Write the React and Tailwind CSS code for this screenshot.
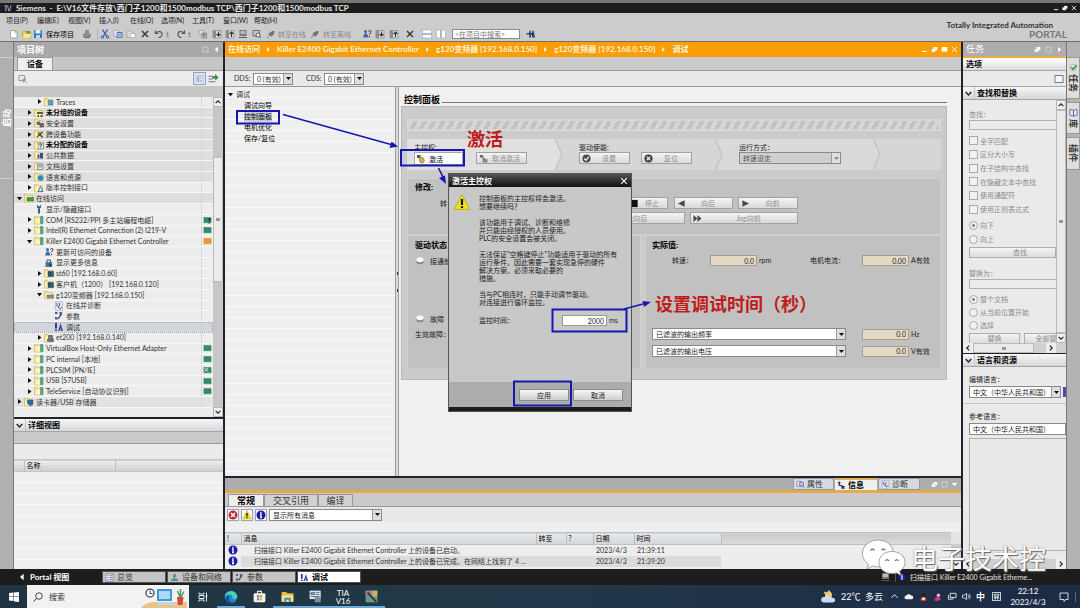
import React from "react";

const stripes =
  "bg-[repeating-linear-gradient(to_bottom,#efefef_0px,#efefef_10px,#fafafa_10px,#fafafa_11px)]";

/* ---------- small drawings ---------- */

function Svg({ children, className = "w-[10px] h-[10px]", box = "0 0 20 20" }) {
  return (
    <svg viewBox={box} className={"block shrink-0 " + className} aria-hidden="true">
      {children}
    </svg>
  );
}

function Glyph({ kind, className }) {
  const k = "#3a3a3a";
  const art = {
    newdoc: (
      <>
        <path d="M3 3h10l3 3v12H3z" fill="#fff" stroke="#7a93ad" strokeWidth="1.5" />
        <path d="M13 1l1.5 3L18 5l-3 2-1 3-2-3-3-1 3-2z" fill="#e9c522" />
      </>
    ),
    open: (
      <>
        <path d="M1 5h7l2 3h8v10H1z" fill="#f2cf4a" stroke="#b3902a" />
        <path d="M9 4h7v5H9z" fill="#4f9b4f" />
        <path d="M4 10h15l-3 8H1z" fill="#fbe58b" />
      </>
    ),
    save: (
      <>
        <rect x="2" y="2" width="16" height="16" rx="1" fill="#2878c2" />
        <rect x="5" y="2" width="10" height="7" fill="#e8f1fa" />
        <rect x="6" y="12" width="8" height="6" fill="#bcd7ee" />
      </>
    ),
    print: (
      <>
        <path d="M6 2h8v7H6zM2 9h16v7H2z" fill="#8d8d8d" />
        <path d="M4 16h12v2H4z" fill="#6c6c6c" />
      </>
    ),
    cut: (
      <>
        <path d="M5 1l8 13M15 1L7 14" stroke="#3457a8" strokeWidth="2.4" />
        <circle cx="5" cy="16" r="2.5" fill="none" stroke="#3457a8" strokeWidth="2" />
        <circle cx="15" cy="16" r="2.5" fill="none" stroke="#3457a8" strokeWidth="2" />
      </>
    ),
    copy: (
      <>
        <path d="M2 3h9v11H2z" fill="#eef3fb" stroke="#6c86b8" />
        <path d="M8 7h10v10H8z" fill="#c9d8f0" stroke="#3457a8" strokeWidth="1.6" />
        <path d="M10 10h6M10 13h6" stroke="#3457a8" />
      </>
    ),
    paste: (
      <>
        <path d="M2 4h11v13H2z" fill="#dcdcdc" stroke="#8f8f8f" />
        <path d="M9 9h9v8H9z" fill="#fff" stroke="#8f8f8f" />
      </>
    ),
    x: <path d="M4 4l12 12M16 4L4 16" stroke={k} strokeWidth="3" />,
    undo: (
      <path d="M3 3v6h6M4 9c3-6 13-5 12 2 0 4-4 6-7 6" fill="none" stroke="#555" strokeWidth="2.4" />
    ),
    redo: (
      <path d="M17 3v6h-6M16 9c-3-6-13-5-12 2 0 4 4 6 7 6" fill="none" stroke="#555" strokeWidth="2.4" />
    ),
    updown: (
      <path d="M10 3v10M6 8h8M6 16h8" fill="none" stroke="#777" strokeWidth="2" />
    ),
    chip: (
      <>
        <path d="M2 3h9v8H2z" fill="#e4e4e4" stroke="#777" />
        <path d="M8 8h9v10H8z" fill="#c7c7c7" stroke="#555" />
        <path d="M10 11h5M10 14h5" stroke="#444" strokeWidth="1.4" />
      </>
    ),
    down: (
      <>
        <path d="M2 3h16v15H2z" fill="#dedede" stroke="#666" />
        <path d="M2 3h6v15H2z" fill="#8c8c8c" />
        <path d="M13 5v8M9 10l4 4 4-4" fill="none" stroke="#333" strokeWidth="2.2" />
      </>
    ),
    up: (
      <>
        <path d="M2 3h16v15H2z" fill="#dedede" stroke="#666" />
        <path d="M2 3h6v15H2z" fill="#8c8c8c" />
        <path d="M13 16V7M9 10l4-4 4 4" fill="none" stroke="#333" strokeWidth="2.2" />
      </>
    ),
    plc: (
      <>
        <path d="M3 2h14v12H3z" fill="#777" />
        <path d="M5 4h10v6H5z" fill="#bbb" />
        <path d="M2 16h16v2H2z" fill="#555" />
      </>
    ),
    find: (
      <>
        <path d="M2 3h13v11H2z" fill="#c9c9c9" stroke="#555" strokeWidth="1.6" />
        <circle cx="12" cy="12" r="4" fill="#eee" stroke="#444" strokeWidth="1.6" />
        <path d="M15 15l3 3" stroke="#444" strokeWidth="2" />
      </>
    ),
    plug: (
      <path d="M2 18l5-5M6 9l5 5 5-4 2-7-7 2z" fill="#777" stroke="#666" strokeWidth="2" />
    ),
    help: (
      <>
        <path d="M2 17l3-8h5l3 8z" fill="#3d68a0" />
        <circle cx="7" cy="5" r="3" fill="#3d68a0" />
        <path d="M13 5c1-3 6-2 5 1 0 2-3 2-3 5M15 14v2" fill="none" stroke="#222" strokeWidth="2" />
      </>
    ),
    split1: (
      <>
        <rect x="1" y="2" width="18" height="16" fill="#fff" stroke="#8f9db5" />
        <path d="M1 10h18" stroke="#5a6fa5" strokeWidth="2" />
      </>
    ),
    split2: (
      <>
        <rect x="1" y="2" width="18" height="16" fill="#fff" stroke="#8f9db5" />
        <path d="M10 2v16" stroke="#5a6fa5" strokeWidth="2" />
      </>
    ),
    bino: (
      <path d="M1 8h5l1-5h2l1 5h2l1-5h2l3 14h-6v-5h-2v5H6l1-6H1z" fill="#2b3f78" />
    ),
    wrench: (
      <path d="M6 1v6l4 3 4-3V1l-3 4H9zM8 9h4v10H8z" fill="#35588f" />
    ),
    info: (
      <>
        <path d="M3 8h13v10H3z" fill="#4a7a9b" />
        <path d="M6 8V4h7v4" fill="none" stroke="#2f5571" strokeWidth="2" />
        <path d="M11 10l6 4-6 4z" fill="#24415a" />
      </>
    ),
    diag: (
      <>
        <path d="M3 1h14v18H3z" fill="#e3e8f2" stroke="#8c98b3" />
        <path d="M6 4v5c0 3 5 3 5 0V4M9 11c0 6 6 6 6 1" fill="none" stroke="#3b4f86" strokeWidth="1.8" />
      </>
    ),
    param: (
      <>
        <path d="M2 2h5v4H2zM11 2h6l-6 8zM2 12h5v5H2z" fill="#545a94" />
        <path d="M8 16l8-11" stroke="#2d2d66" strokeWidth="2.4" />
      </>
    ),
    tune: (
      <>
        <path d="M2 2h4v11H2zM2 15h4v3H2z" fill="#2636b5" />
        <path d="M13 2l5 16h-4l-1-5-2 5H8l3-9z" fill="#3c4b92" />
      </>
    ),
    overview: (
      <>
        <path d="M2 2h16v16H2z" fill="#f4f6fa" stroke="#66728e" strokeWidth="1.6" />
        <path d="M5 6h3M5 10h3M5 14h3M10 6h6M10 10h6M10 14h6" stroke="#66728e" strokeWidth="2" />
      </>
    ),
    network: (
      <>
        <path d="M7 3h6v6H7zM3 13h14v5H3z" fill="#4a8d8d" />
        <path d="M10 9v4" stroke="#2c5e5e" strokeWidth="2" />
      </>
    ),
    hand: (
      <>
        <path d="M2 2h7v6H2z" fill="#555" />
        <path d="M7 7l2-2 3 2 3 1 2 5-2 5H9l-3-6z" fill="#d9a94a" stroke="#8a6420" />
      </>
    ),
    handoff: (
      <>
        <path d="M2 2h7v6H2zM8 8h4v4H8z" fill="#666" />
        <path d="M9 12h9v6H9z" fill="#8a8a8a" stroke="#555" />
      </>
    ),
    ok: (
      <>
        <circle cx="10" cy="10" r="9" fill="#4b4b4b" />
        <path d="M5 10l4 4 6-8" fill="none" stroke="#fff" strokeWidth="2.6" />
      </>
    ),
    no: (
      <>
        <circle cx="10" cy="10" r="9" fill="#3d3d3d" />
        <path d="M6 6l8 8M14 6l-8 8" stroke="#fff" strokeWidth="2.6" />
      </>
    ),
    left: <path d="M17 3v14L2 10z" fill="#4a4a4a" />,
    right: <path d="M3 3v14l15-7z" fill="#4a4a4a" />,
    ff: <path d="M1 2v16l9-8zM10 2v16l9-8z" fill="#4a4a4a" />,
    stop: <rect x="3" y="2" width="14" height="16" fill="#111" />,
    err: (
      <>
        <circle cx="10" cy="10" r="9" fill="#c3272d" />
        <path d="M6 6l8 8M14 6l-8 8" stroke="#fff" strokeWidth="3" />
      </>
    ),
    warn: (
      <>
        <path d="M10 1l9 17H1z" fill="#f2e21c" stroke="#b9a90f" />
        <path d="M10 6v7M10 14.5v2" stroke="#111" strokeWidth="2.6" />
      </>
    ),
    note: (
      <>
        <circle cx="10" cy="10" r="9" fill="#1c1ca8" />
        <path d="M10 3.500v2.500M8 8h2v7M8 15h4" stroke="#fff" strokeWidth="2.600" fill="none" />
      </>
    ),
    props: (
      <>
        <path d="M2 3h9v11H2z" fill="#eef1f7" stroke="#6e7b99" strokeWidth="1.5" />
        <circle cx="12" cy="9" r="5" fill="none" stroke="#4a5f93" strokeWidth="1.8" />
        <path d="M15 13l3 4" stroke="#4a5f93" strokeWidth="2" />
      </>
    ),
    msg: (
      <>
        <path d="M5 1v9h6v6h6M2 4h6" fill="none" stroke="#22305f" strokeWidth="2.6" />
        <path d="M9 11l5 5 4-5z" fill="#22305f" />
      </>
    ),
    float: (
      <>
        <path d="M7 3h11v9H7z" fill="#fff" />
        <path d="M2 8h11v9H2z" fill="#fff" stroke="#bbb" />
      </>
    ),
    boxo: <rect x="3" y="3" width="14" height="14" fill="none" stroke="#dcdcdc" strokeWidth="2" />,
    max: <rect x="2" y="3" width="16" height="13" fill="#fff" />,
    min: <path d="M3 14h14v3H3z" fill="#fff" />,
    closew: <path d="M3 3l14 14M17 3L3 17" stroke="#fff" strokeWidth="2.6" />,
    triR: <path d="M6 2v16l9-8z" fill="#fff" />,
    triL: <path d="M14 2v16L5 10z" fill="#fff" />,
    triD: <path d="M2 6h16l-8 9z" fill="#fff" />,
    panel: <rect x="2" y="3" width="16" height="14" fill="#f7f8fb" stroke="#6c7a9c" strokeWidth="2" />,
    sync: (
      <>
        <path d="M1 5h8v2H1zM1 10h8v2H1zM1 15h12v2H1z" fill="#6c7a8c" />
        <path d="M8 6h5V2l6 6-6 6v-4H8z" fill="#2b8a3e" />
      </>
    ),
    list: (
      <>
        <path d="M2 3h16v14H2z" fill="#fff" stroke="#7f8fb0" />
        <path d="M5 6h4v9H5zM11 6h5M11 10h5M11 14h5" stroke="#7f8fb0" strokeWidth="1.6" fill="#c5d0e4" />
      </>
    ),
    device: (
      <>
        <path d="M2 3h11v10H2z" fill="none" stroke="#9a9a9a" strokeWidth="2" />
        <path d="M8 9l9 8M16 9l-6 8" stroke="#8c8c8c" strokeWidth="2" />
      </>
    ),
    book: (
      <path d="M2 3l8 2v13l-8-2zM18 3l-8 2v13l8-2z" fill="#e8ecf8" stroke="#4352a0" strokeWidth="1.6" />
    ),
    task: (
      <>
        <circle cx="9" cy="10" r="7" fill="#dfe7df" stroke="#788" />
        <path d="M5 9l4 5 8-9" fill="none" stroke="#2b8a3e" strokeWidth="3" />
      </>
    ),
  };
  return <Svg className={className}>{art[kind]}</Svg>;
}

function Folder({ badge }) {
  const art = {
    page: <path d="M8 7h10v9H8z" fill="#5aa0cf" stroke="#2e6f9f" />,
    dev: <path d="M6 8h12v4H6zM7 14h3v4H7zM13 14h4v4h-4z" fill="#4d5a3c" />,
    sec: <path d="M6 8h6v5H6zM12 11h7v7h-7z" fill="#b4552f" stroke="#35629e" strokeWidth="1.5" />,
    cross: <path d="M6 16L17 6M8 7l9 10" stroke="#39512f" strokeWidth="3" />,
    ask: (
      <>
        <rect x="8" y="6" width="11" height="12" fill="#dfe3df" stroke="#555" />
        <path d="M11 9c1-2 5-1 4 1l-2 3M13 15v1" fill="none" stroke="#222" strokeWidth="1.8" />
      </>
    ),
    data: <path d="M7 9h4v8H7zM12 6h6v11h-6z" fill="#2f4fa0" />,
    doc: <path d="M7 6h11v11H7zM9 9h7M9 12h7" fill="#e3e8ee" stroke="#68788c" strokeWidth="1.5" />,
    lang: <circle cx="13" cy="12" r="6" fill="#2e86b8" stroke="#8cc7a5" strokeWidth="2" />,
    ver: <path d="M8 17l5-10 5 10z" fill="#dbe7f3" stroke="#3a6ea5" strokeWidth="1.8" />,
    net: <path d="M6 9h13v7H6z" fill="#3f9b4b" stroke="#23662d" />,
    port: <path d="M13 3h5v14h-5z" fill="#4fae8c" stroke="#2c7d62" />,
    cpu: <path d="M8 7h11v10H8zM10 9h3v5h-3z" fill="#2f6570" stroke="#1f3b43" />,
    drive: <path d="M6 10h13v6H6z" fill="#8d8d8d" stroke="#5d5d5d" />,
    io: <path d="M9 5h8v6H9zM7 12h12v5H7z" fill="#777" stroke="#444" />,
    card: <path d="M7 6h11v8l-5 4-6-5z" fill="#2d6d9c" stroke="#1f4c70" />,
  };
  return (
    <Svg>
      <path d="M1 3h6l2 2h8v13H1z" fill="#f6e084" stroke="#c4a640" />
      <path d="M3 7h13v10H3z" fill="#fdf4c4" />
      {art[badge]}
    </Svg>
  );
}

function Caret({ open }) {
  return (
    <Svg className="w-[5px] h-[5px]" box="0 0 10 10">
      {open ? <path d="M0 2h10L5 9z" fill="#111" /> : <path d="M2 0v10l7-5z" fill="#111" />}
    </Svg>
  );
}

function Chevron({ dir = "down", className = "w-[7px] h-[7px]" }) {
  const d = {
    down: "M1 3l4 4 4-4",
    up: "M1 7l4-4 4 4",
    left: "M7 1L3 5l4 4",
    right: "M3 1l4 4-4 4",
  }[dir];
  return (
    <Svg className={className} box="0 0 10 10">
      <path d={d} fill="none" stroke="#222" strokeWidth="2" />
    </Svg>
  );
}

/* ---------- controls ---------- */

function Select({ label, value, className = "", flat }) {
  return (
    <div
      className={
        "flex h-[12px] items-stretch border border-[#8a8a8a] " +
        (flat ? "bg-[#cfcfcf] text-[#555] " : "bg-white ") +
        className
      }
    >
      <select
        aria-label={label}
        defaultValue={value}
        className="min-w-0 flex-1 appearance-none bg-transparent pl-[3px] text-[7px] leading-[10px]"
      >
        <option>{value}</option>
      </select>
      <span className="flex w-[9px] shrink-0 items-center justify-center border-l border-[#9a9a9a] bg-[#dedede]">
        <Svg className="w-[5px] h-[5px]" box="0 0 10 10">
          <path d="M0 2h10L5 8z" fill={flat ? "#888" : "#111"} />
        </Svg>
      </span>
    </div>
  );
}

function PanelButton({ icon, children, className = "" }) {
  return (
    <button
      type="button"
      className={
        "flex h-[12px] items-center border border-[#a2a2a2] bg-linear-to-b from-[#f4f4f4] to-[#d9d9d9] px-[2px] text-[#8e8e8e] " +
        className
      }
    >
      <Glyph kind={icon} className="h-[9px] w-[9px]" />
      <span className="flex-1 text-center">{children}</span>
    </button>
  );
}

function Reading({ label, value, unit }) {
  return (
    <div className="flex shrink-0 items-center gap-[2px]">
      <input
        aria-label={label}
        readOnly
        value={value}
        className="h-[11px] w-[47px] border border-[#a39d90] bg-[#e4d9c3] pr-[2px] text-right text-[7px]"
      />
      <span className="w-[26px] whitespace-nowrap">{unit}</span>
    </div>
  );
}

function SectionHead({ children }) {
  return (
    <div className="flex h-[13px] shrink-0 items-center border-b border-[#a5a5a5] bg-linear-to-b from-[#f7f7f7] to-[#d6d6d6] pl-[2px] text-[8px] font-bold text-black">
      <Chevron />
      <span className="ml-[2px] border-l border-[#c2c2c2] pl-[2px]">{children}</span>
    </div>
  );
}

/* ---------- top ---------- */

function TitleBar() {
  return (
    <div className="flex h-[13px] shrink-0 items-center border-t-[3px] border-[#777] bg-[#1d1d1d] px-[3px] text-[8px] font-bold text-[#e6e6e6]">
      <Svg className="h-[8px] w-[10px]">
        <path d="M1 3h8v3H1zM3 6h3v12H3zM10 3l3 12 3-12h3l-4 15h-4L8 8z" fill="#8f97b8" />
      </Svg>
      <span className="ml-[3px] flex-1 whitespace-pre">
        {"Siemens  -  E:\\V16文件存放\\西门子1200和1500modbus TCP\\西门子1200和1500modbus TCP"}
      </span>
      <span className="flex gap-[3px]">
        <Glyph kind="min" className="h-[6px] w-[6px]" />
        <Glyph kind="float" className="h-[6px] w-[6px]" />
        <Glyph kind="closew" className="h-[6px] w-[6px]" />
      </span>
    </div>
  );
}

const menus = [
  "项目(P)", "编辑(E)", "视图(V)", "插入(I)", "在线(O)",
  "选项(N)", "工具(T)", "窗口(W)", "帮助(H)",
];

function Tool({ kind, label, children, className = "w-[13px]" }) {
  return (
    <button type="button" aria-label={label} className={"flex h-[12px] shrink-0 items-center justify-center " + className}>
      <Glyph kind={kind} className="h-[10px] w-[10px]" />
      {children}
    </button>
  );
}

function Header() {
  return (
    <header className="flex h-[29px] shrink-0 justify-between border-b border-[#6f6f6f] bg-[#cccccc]">
      <div>
        <nav className="flex h-[14px] items-center gap-[3px] pl-[6px] text-[7px] text-[#222]">
          {menus.map((m) => (
            <a key={m} href="#menu" className="w-[28px] whitespace-nowrap">
              {m}
            </a>
          ))}
        </nav>
        <div className="flex h-[14px] items-center pl-[7px] text-[7px]">
          <Tool kind="newdoc" label="新建" />
          <Tool kind="open" label="打开" />
          <button type="button" className="flex w-[44px] items-center gap-[3px] whitespace-nowrap text-black">
            <Glyph kind="save" className="h-[10px] w-[10px]" />
            保存项目
          </button>
          <Tool kind="print" label="打印" className="w-[21px] border-r border-[#b5b5b5]" />
          <Tool kind="cut" label="剪切" />
          <Tool kind="copy" label="复制" />
          <Tool kind="paste" label="粘贴" />
          <Tool kind="x" label="删除" className="w-[15px]" />
          <Tool kind="undo" label="撤消" className="w-[21px]">
            <Glyph kind="updown" className="h-[7px] w-[7px]" />
          </Tool>
          <Tool kind="redo" label="重做" className="w-[22px]">
            <Glyph kind="updown" className="h-[7px] w-[7px]" />
          </Tool>
          <Tool kind="chip" label="编译" className="w-[15px]" />
          <Tool kind="down" label="下载" />
          <Tool kind="up" label="上传" />
          <Tool kind="plc" label="仿真" />
          <Tool kind="find" label="查看" className="w-[15px]" />
          <button type="button" className="flex w-[46px] items-center gap-[3px] whitespace-nowrap pl-[2px] text-[#8a8a8a]">
            <Glyph kind="plug" className="h-[9px] w-[9px]" />
            转至在线
          </button>
          <button type="button" className="flex w-[50px] items-center gap-[4px] whitespace-nowrap text-[#8a8a8a]">
            <Glyph kind="plug" className="h-[9px] w-[9px]" />
            转至离线
          </button>
          <Tool kind="help" label="可访问的设备" />
          <Tool kind="down" label="启动" />
          <Tool kind="up" label="停止" className="w-[15px]" />
          <Tool kind="x" label="关闭" className="w-[18px]" />
          <Tool kind="split1" label="水平拆分" className="w-[15px]" />
          <Tool kind="split2" label="垂直拆分" />
          <input
            aria-label="搜索"
            placeholder="<在项目中搜索>"
            className="ml-[5px] h-[10px] w-[68px] border border-[#8a8a8a] bg-white pl-[2px] text-[7px] placeholder:text-[#777]"
          />
          <Tool kind="bino" label="查找" className="w-[22px]" />
        </div>
      </div>
      <div className="flex flex-col items-end pr-[13px] pt-[8px] leading-[9px]">
        <span className="pr-[14px] text-[8px] font-bold text-[#333]">Totally Integrated Automation</span>
        <span className="text-[10px] font-bold text-[#777]">PORTAL</span>
      </div>
    </header>
  );
}

/* ---------- project tree ---------- */

const tree = [
  [2, "r", "page", "Traces", "l"],
  [1, "r", "dev", "未分组的设备", "b"],
  [1, "r", "sec", "安全设置", "s"],
  [1, "r", "cross", "跨设备功能", "s"],
  [1, "r", "ask", "未分配的设备", "b"],
  [1, "r", "data", "公共数据", "s"],
  [1, "r", "doc", "文档设置", "s"],
  [1, "r", "lang", "语言和资源", "s"],
  [1, "r", "ver", "版本控制接口", "l"],
  [0, "d", "net", "在线访问", "s"],
  [1, "", "@wrench", "显示/隐藏接口", "l"],
  [1, "r", "port", "COM [RS232/PPI 多主站编程电缆]", "l", "ask"],
  [1, "r", "port", "Intel(R) Ethernet Connection (2) I219-V", "l", "green"],
  [1, "d", "port", "Killer E2400 Gigabit Ethernet Controller", "l", "orange"],
  [2, "", "@help", "更新可访问的设备", "l"],
  [2, "", "@info", "显示更多信息", "l"],
  [2, "r", "cpu", "st60 [192.168.0.60]", "l"],
  [2, "r", "cpu", "客户机（1200） [192.168.0.120]", "l"],
  [2, "d", "drive", "g120变频器 [192.168.0.150]", "l"],
  [3, "", "@diag", "在线并诊断", "l"],
  [3, "", "@param", "参数", "l"],
  [3, "", "@tune", "调试", "x"],
  [2, "r", "io", "et200 [192.168.0.140]", "l"],
  [1, "r", "port", "VirtualBox Host-Only Ethernet Adapter", "l", "green"],
  [1, "r", "port", "PC internal [本地]", "l", "green"],
  [1, "r", "port", "PLCSIM [PN/IE]", "l", "cross"],
  [1, "r", "port", "USB [S7USB]", "l", "green"],
  [1, "r", "port", "TeleService [自动协议识别]", "l", "green"],
  [0, "r", "card", "读卡器/USB 存储器", "m"],
];

const indent = ["pl-[3px]", "pl-[13px]", "pl-[23px]", "pl-[33px]"];
const shade = {
  l: "bg-[#ededed]",
  m: "bg-[#e2e2e2]",
  s: "bg-[#dedede]",
  b: "bg-[#dedede] font-bold text-black",
  x: "bg-[#d2d6da] outline-1 -outline-offset-1 outline-dotted outline-[#9aa4ae]",
};

function PortState({ kind }) {
  if (!kind) return null;
  return (
    <Svg className="h-[8px] w-[9px]">
      <path d="M1 3l3 1h15v13H1z" fill={kind === "orange" ? "#e59c22" : "#2f8f63"} stroke={kind === "orange" ? "#b87410" : "#1f6b48"} />
      {kind === "ask" && <path d="M12 9c1-3 6-2 5 1l-3 3M14 16v3" fill="none" stroke="#111" strokeWidth="2.4" />}
      {kind === "cross" && <path d="M3 5l8 9M11 5l-8 9" stroke="#e8e8e8" strokeWidth="2.4" />}
    </Svg>
  );
}

function VScroll({ className = "", before, thumb, after }) {
  return (
    <div className={"flex w-[10px] shrink-0 flex-col bg-[#c6c6c6] " + className}>
      <span className="flex h-[10px] shrink-0 items-center justify-center border border-[#b5b5b5] bg-[#eeeeee]">
        <Chevron dir="up" className="h-[6px] w-[6px]" />
      </span>
      <span className={before} />
      <span className={"flex items-center justify-center border border-[#bababa] bg-[#ebebeb] " + thumb}>
        <span className="h-[3px] w-[4px] bg-[#999]" />
      </span>
      <span className={after} />
      <span className="flex h-[10px] shrink-0 items-center justify-center border border-[#b5b5b5] bg-[#eeeeee]">
        <Chevron dir="down" className="h-[6px] w-[6px]" />
      </span>
    </div>
  );
}

function ProjectTree() {
  return (
    <aside className="flex w-[212px] shrink-0 flex-col border-r-2 border-l border-r-[#22222e] border-l-[#777] bg-[#c6c6c6]">
      <div className="flex h-[15px] shrink-0 items-center justify-between bg-[#a9a9a9] px-[3px] text-[9px] font-bold text-white">
        <span>项目树</span>
        <span className="flex gap-[4px]">
          <Glyph kind="boxo" className="h-[7px] w-[7px]" />
          <Glyph kind="triL" className="h-[7px] w-[7px]" />
        </span>
      </div>
      <div className="flex h-[14px] shrink-0 items-end border-b border-[#999] pl-[3px]">
        <button type="button" className="h-[13px] w-[36px] border border-b-0 border-[#999] bg-[#efefef] text-[8px] font-bold text-black">
          设备
        </button>
      </div>
      <div className="flex h-[15px] shrink-0 items-center bg-[#ececec] px-[4px]">
        <Glyph kind="device" className="h-[10px] w-[10px]" />
        <span className="flex-1" />
        <button type="button" aria-label="列表" className="mr-[2px] border border-[#8ea2c8] bg-[#dfe6f3] p-px">
          <Glyph kind="list" className="h-[9px] w-[9px]" />
        </button>
        <Glyph kind="sync" className="h-[11px] w-[11px]" />
      </div>
      <div className="h-[11px] shrink-0" />
      <div className="flex h-[320px] shrink-0">
        <div className="min-w-0 flex-1 bg-[#ededed]">
          <div role="tree" className="flex h-[311px] flex-col text-[7px]">
            {tree.map(([lvl, arrow, icon, text, tone, port], i) => (
              <div
                key={i}
                role="treeitem"
                aria-selected={tone === "x"}
                className={"flex min-h-0 flex-1 items-center gap-[2px] border-b border-[#f7f7f7] whitespace-nowrap " + indent[lvl] + " " + shade[tone]}
              >
                {arrow ? <Caret open={arrow === "d"} /> : <span className="w-[5px]" />}
                {icon[0] === "@" ? <Glyph kind={icon.slice(1)} className="h-[10px] w-[10px]" /> : <Folder badge={icon} />}
                <span className="flex-1">{text}</span>
                <span className="flex w-[12px] shrink-0 items-center self-stretch border-l border-[#d5d5d5] pl-[1px]">
                  <PortState kind={port} />
                </span>
              </div>
            ))}
          </div>
        </div>
        <VScroll before="h-[50px]" thumb="h-[125px]" after="flex-1" />
      </div>
      <div className="shrink-0 border-t-2 border-[#22222e]">
        <SectionHead>详细视图</SectionHead>
      </div>
      <div className="h-[12px] shrink-0 border-b border-[#9a9a9a] bg-[#cacaca]" />
      <div className="h-[15px] shrink-0 bg-[#ebebeb]" />
      <table className="w-full table-fixed text-[7px]">
        <thead>
          <tr className="h-[11px] border-y border-[#c5c5c5] bg-linear-to-b from-[#ececec] to-[#d0d0d0]">
            <th className="w-[10px] border-r border-[#c0c0c0]" />
            <th className="w-[91px] border-r border-[#c0c0c0] pl-[2px] text-left font-normal text-black">名称</th>
            <th />
          </tr>
        </thead>
      </table>
      <div className={"flex-1 " + stripes} />
    </aside>
  );
}

/* ---------- work area ---------- */

function Step({ children, className = "" }) {
  return <div className={"flex flex-col gap-[1px] pt-[4px] leading-[8px] " + className}>{children}</div>;
}

function StepArrow({ fill, next }) {
  return (
    <svg viewBox="0 0 8 31" preserveAspectRatio="none" className="h-[31px] w-[8px] shrink-0" aria-hidden="true">
      <rect width="8" height="31" fill={next} />
      <path d="M0 0l7 15.500L0 31z" fill={fill} />
      <path d="M0 0l7 15.500L0 31" fill="none" stroke="#c4c4c4" strokeWidth="1.500" />
    </svg>
  );
}

function ControlPanel() {
  return (
    <div className="min-w-0 flex-1 bg-[#f0f0f0] pl-[2px] pr-[14px] pt-[7px] text-[7px] text-[#222]">
      <div className="flex h-[11px] items-center gap-[2px] pl-[3px]">
        <h2 className="text-[9px] font-bold text-black">控制面板</h2>
        <span className="mt-[6px] h-px flex-1 bg-[#777]" />
      </div>
      <div className="mt-[1px] border border-[#b8b8b8] bg-[#cbcbcb] px-[5px] pb-[10px] pt-[12px]">
        <div className="h-[12px] border border-[#dadada] bg-[#d6d6d6] p-px">
          <div className="h-full bg-[repeating-linear-gradient(120deg,#d6d6d6_0px,#d6d6d6_4px,#c2c2c2_4px,#c2c2c2_8px)]" />
        </div>
        <div className="mt-[8px] flex h-[31px] bg-[#d6d6d6]">
          <Step className="w-[148px] bg-[#e0e0e0] pl-[7px]">
            <span>主控权:</span>
            <div className="flex gap-[13px]">
              <button type="button" className="flex h-[13px] w-[49px] items-center gap-[3px] border border-[#aaa] bg-white pl-[1px] text-black">
                <Glyph kind="hand" className="h-[10px] w-[10px]" />
                激活
              </button>
              <PanelButton icon="handoff" className="w-[51px]">取消激活</PanelButton>
            </div>
          </Step>
          <StepArrow fill="#e0e0e0" next="#d6d6d6" />
          <Step className="w-[152px] pl-[16px]">
            <span>驱动使能:</span>
            <div className="flex gap-[11px]">
              <PanelButton icon="ok" className="w-[51px]">设置</PanelButton>
              <PanelButton icon="no" className="w-[51px]">复位</PanelButton>
            </div>
          </Step>
          <StepArrow fill="#d6d6d6" next="#d9d9d9" />
          <Step className="w-[150px] bg-[#d9d9d9] pl-[16px]">
            <span>运行方式：</span>
            <Select flat label="运行方式" value="转速设定" className="w-[102px]" />
          </Step>
          <StepArrow fill="#d9d9d9" next="#d6d6d6" />
        </div>

        <div className="mt-[8px] h-[57px] border border-[#cfcfcf] bg-[#c1c1c1] pl-[7px] pt-[3px]">
          <h3 className="text-[8px] font-bold leading-[10px] text-black">修改:</h3>
          <div className="mt-[5px] flex items-center pl-[25px]">
            <span className="w-[172px]">转</span>
            <PanelButton icon="stop" className="w-[56px] pl-[17px]">停止</PanelButton>
            <PanelButton icon="left" className="ml-[6px] w-[59px]">向后</PanelButton>
            <PanelButton icon="right" className="ml-[5px] w-[60px]">向前</PanelButton>
          </div>
          <div className="mt-[3px] flex gap-[5px] pl-[161px]">
            <PanelButton icon="left" className="w-[109px]">Jog向后</PanelButton>
            <PanelButton icon="ff" className="w-[108px]">Jog向前</PanelButton>
          </div>
        </div>

        <div className="flex gap-[4px]">
          <div className="h-[134px] w-[234px] shrink-0 border border-[#cfcfcf] bg-[#c1c1c1] pl-[7px] pt-[4px]">
            <h3 className="text-[8px] font-bold leading-[10px] text-black">驱动状态</h3>
            <div className="mt-[6px] flex items-center gap-[5px] leading-[10px]">
              <Lamp />
              接通就绪
            </div>
            <div className="mt-[48px] flex items-center gap-[5px] leading-[10px]">
              <Lamp />
              故障
            </div>
            <div className="mt-[5px] leading-[10px]">生效故障：</div>
          </div>
          <div className="h-[134px] min-w-0 flex-1 border border-[#cfcfcf] bg-[#c1c1c1] pl-[6px] pt-[4px]">
            <h3 className="text-[8px] font-bold leading-[10px] text-black">实际值:</h3>
            <div className="mt-[5px] flex items-center pl-[20px]">
              <span className="w-[38px] shrink-0">转速：</span>
              <Reading label="转速" value="0.0" unit="rpm" />
              <span className="ml-[25px] w-[52px] shrink-0">电机电流：</span>
              <Reading label="电机电流" value="0.00" unit="A有效" />
            </div>
            <div className="mt-[62px] flex items-center gap-[16px]">
              <Select label="信号一" value="已滤波的输出频率" className="w-[194px] shrink-0" />
              <Reading label="输出频率" value="0.0" unit="Hz" />
            </div>
            <div className="mt-[5px] flex items-center gap-[16px]">
              <Select label="信号二" value="已滤波的输出电压" className="w-[194px] shrink-0" />
              <Reading label="输出电压" value="0.0" unit="V有效" />
            </div>
          </div>
        </div>
      </div>
    </div>
  );
}

function Lamp() {
  return (
    <Svg className="h-[10px] w-[10px]">
      <circle cx="10" cy="10" r="8" fill="#d9d9d9" />
      <path d="M2 10a8 7 0 0 0 16 0z" fill="#8a8a8a" />
      <ellipse cx="10" cy="8" rx="7" ry="4.500" fill="#f7f7f7" />
    </Svg>
  );
}

const crumbs = [
  "在线访问",
  "Killer E2400 Gigabit Ethernet Controller",
  "g120变频器 [192.168.0.150]",
  "g120变频器 [192.168.0.150]",
  "调试",
];

const messages = [
  ["扫描接口 Killer E2400 Gigabit Ethernet Controller 上的设备已启动。", "2023/4/3", "21:39:11"],
  ["扫描接口 Killer E2400 Gigabit Ethernet Controller 上的设备已完成。在网络上找到了 4 ...", "2023/4/3", "21:39:20"],
];

function InfoPane() {
  const th = "border-r border-[#bcbcbc] pl-[2px] text-left font-normal text-black";
  return (
    <section className="flex h-[93px] shrink-0 flex-col border-t-2 border-[#22222e] bg-[#ededed] text-[7px]">
      <div className="flex h-[15px] shrink-0 items-end justify-end border-b-[3px] border-[#e3a94f] bg-[#adadad] pr-[3px] text-[8px]">
        <button type="button" className="flex h-[12px] w-[41px] items-center gap-[2px] border border-[#999] bg-[#d5d9e0] pl-[2px]">
          <Glyph kind="props" className="h-[9px] w-[9px]" />
          属性
        </button>
        <button type="button" className="ml-[1px] flex h-[12px] w-[42px] items-center gap-[2px] border-t-2 border-[#e9b35c] bg-[#f1efec] pl-[2px] font-bold text-black">
          <Glyph kind="msg" className="h-[9px] w-[9px]" />
          信息
        </button>
        <button type="button" className="ml-[1px] flex h-[12px] w-[42px] items-center gap-[2px] border border-[#999] bg-[#d5d9e0] pl-[2px]">
          <Glyph kind="diag" className="h-[9px] w-[9px]" />
          诊断
        </button>
        <span className="ml-[11px] flex gap-[3px] self-center">
          <Glyph kind="float" className="h-[7px] w-[7px]" />
          <Glyph kind="boxo" className="h-[7px] w-[7px]" />
          <Glyph kind="triD" className="h-[7px] w-[7px]" />
        </span>
      </div>
      <div className="flex h-[14px] shrink-0 items-end border-b border-[#999] bg-[#cbcbcb] pl-[3px] text-[9px]">
        <button type="button" className="h-[12px] w-[36px] border border-b-0 border-[#999] bg-[#efefef] font-bold leading-[11px] text-black">常规</button>
        <button type="button" className="h-[12px] w-[54px] border border-b-0 border-[#999] bg-[#d2d2d2] leading-[11px]">交叉引用</button>
        <button type="button" className="h-[12px] w-[35px] border border-b-0 border-[#999] bg-[#d2d2d2] leading-[11px]">编译</button>
      </div>
      <div className="flex h-[15px] shrink-0 items-center gap-[2px] bg-[#e9e9e9] pl-[2px]">
        {["err", "warn", "note"].map((k) => (
          <button key={k} type="button" aria-label={k} className="flex h-[12px] w-[12px] items-center justify-center border border-[#9aa3bd] bg-white">
            <Glyph kind={k} className="h-[10px] w-[10px]" />
          </button>
        ))}
        <Select label="消息筛选" value="显示所有消息" className="w-[113px] text-[#222]" />
      </div>
      <div className="h-[10px] shrink-0 bg-[#efefef]" />
      <div className="flex min-h-0 flex-1">
        <table className="flex-1 table-fixed self-start">
          <thead>
            <tr className="h-[12px] border-y border-[#c0c0c0] bg-linear-to-b from-[#e6e9eb] to-[#d3d7d9]">
              <th className={"w-[16px] " + th}>!</th>
              <th className={"w-[295px] " + th}>消息</th>
              <th className={"w-[30px] " + th}>转至</th>
              <th className={"w-[27px] " + th}>?</th>
              <th className={"w-[41px] " + th}>日期</th>
              <th className={"w-[87px] " + th}>时间</th>
              <th className="bg-linear-to-b from-[#c9c9c9] to-[#dcdcdc]" />
            </tr>
          </thead>
          <tbody>
            {messages.map(([text, date, time], i) => (
              <tr key={time} className="h-[11px]">
                <td className="pl-[3px]">
                  <Glyph kind="note" className="h-[10px] w-[10px]" />
                </td>
                <td className={"whitespace-nowrap pl-[13px] " + (i ? "bg-[#d9dcde]" : "")}>{text}</td>
                <td className={i ? "bg-[#d9dcde]" : ""} />
                <td className={i ? "bg-[#d9dcde]" : ""} />
                <td className={"pl-[3px] " + (i ? "bg-[#d9dcde]" : "")}>{date}</td>
                <td className={"pl-[3px] " + (i ? "bg-[#d9dcde]" : "")}>{time}</td>
                <td />
              </tr>
            ))}
          </tbody>
        </table>
        <div className="flex w-[10px] shrink-0 flex-col justify-between bg-[#cfcfcf]">
          <span className="h-[12px] bg-[#e4e4e4]" />
          <span className="flex h-[10px] items-center justify-center bg-[#eee]">
            <Chevron className="h-[6px] w-[6px]" />
          </span>
        </div>
      </div>
    </section>
  );
}

function WorkArea() {
  return (
    <main className="flex min-w-0 flex-1 flex-col">
      <div className="flex h-[15px] shrink-0 items-center justify-between bg-[#fb9d06] px-[3px] pb-[1px] text-[8px] font-bold text-[#fff3d6]">
        <nav className="flex items-center gap-[6px] whitespace-nowrap">
          {crumbs.map((c, i) => (
            <React.Fragment key={i}>
              {i > 0 && (
                <Svg className="h-[5px] w-[5px]" box="0 0 10 10">
                  <path d="M2 0v10l6-5z" fill="#fff3d6" />
                </Svg>
              )}
              <a href="#path">{c}</a>
            </React.Fragment>
          ))}
        </nav>
        <span className="flex gap-[3px]">
          {["min", "float", "max", "closew"].map((k) => (
            <Glyph key={k} kind={k} className="h-[7px] w-[7px]" />
          ))}
        </span>
      </div>
      <div className="h-[14px] shrink-0 border-b border-[#999] bg-[#cacaca]" />
      <div className="flex h-[16px] shrink-0 items-center border-b border-[#999] bg-[#e9e9e9] pl-[9px] text-[7px]">
        <span className="w-[19px]">DDS:</span>
        <Select label="DDS" value="0 (有效)" className="w-[40px]" />
        <span className="ml-[13px] w-[18px]">CDS:</span>
        <Select label="CDS" value="0 (有效)" className="w-[40px]" />
      </div>
      <div className="flex min-h-0 flex-1">
        <nav className={"w-[170px] shrink-0 pl-[3px] pt-[2px] text-[7px] " + stripes}>
          <div className="flex h-[11px] items-center gap-[3px]">
            <Caret open />
            调试
          </div>
          <ul className="flex flex-col pl-[16px] text-black">
            {["调试向导", "控制面板", "电机优化", "保存/复位"].map((t) => (
              <li key={t} className="flex h-[11px] items-center">
                <a href="#page" className={t === "控制面板" ? "bg-[#c9ced6]" : ""}>{t}</a>
              </li>
            ))}
          </ul>
        </nav>
        <div className="flex w-[4px] shrink-0 flex-col items-center justify-center gap-[14px] border-x border-[#9f9f9f] bg-[#d9d9d9]">
          <span className="h-[3px] w-px bg-[#333]" />
          <span className="h-[3px] w-px bg-[#333]" />
        </div>
        <ControlPanel />
      </div>
      <InfoPane />
    </main>
  );
}

/* ---------- tasks ---------- */

function Choice({ type, name, label, checked }) {
  return (
    <label className="flex h-[10px] items-center gap-[2px] whitespace-nowrap">
      <input
        type={type}
        name={name}
        defaultChecked={checked}
        className={
          "h-[9px] w-[9px] appearance-none border border-[#a9a9a9] bg-[#f1f1f1] " +
          (type === "radio" ? "rounded-full checked:bg-[radial-gradient(#8a8a8a_0_1px,#f1f1f1_2px)]" : "")
        }
      />
      {label}
    </label>
  );
}

const softButton =
  "h-[11px] border border-[#adadad] bg-linear-to-b from-[#f5f5f5] to-[#dcdcdc] text-center leading-[9px] whitespace-nowrap";

function Tasks() {
  return (
    <aside className="flex w-[105px] shrink-0 flex-col border-l-2 border-[#22222e] bg-[#eaeaea] text-[7px]">
      <div className="flex h-[16px] shrink-0 items-center justify-between border-b-2 border-[#eda944] bg-[#adadad] px-[3px] text-[9px] text-white">
        <span>任务</span>
        <span className="flex gap-[4px]">
          <Glyph kind="float" className="h-[7px] w-[7px]" />
          <Glyph kind="boxo" className="h-[7px] w-[7px]" />
          <Glyph kind="triR" className="h-[7px] w-[7px]" />
        </span>
      </div>
      <div className="flex h-[13px] shrink-0 items-center border-b border-[#a5a5a5] bg-linear-to-b from-white to-[#dcdcdc] pl-[3px] text-[8px] font-bold text-black">
        选项
      </div>
      <div className="flex h-[16px] shrink-0 items-center justify-end border-b border-[#a5a5a5] pr-[2px]">
        <Glyph kind="panel" className="h-[10px] w-[10px]" />
      </div>
      <SectionHead>查找和替换</SectionHead>
      <div className="flex h-[243px] shrink-0">
        <form className="flex min-w-0 flex-1 flex-col overflow-hidden pl-[6px] pt-[9px] text-[#8c8c8c]">
          <label htmlFor="find" className="leading-[10px]">查找：</label>
          <input id="find" className="mt-[1px] h-[10px] w-full shrink-0 border border-r-0 border-[#b0b0b0] bg-[#ececec]" />
          <div className="mt-[4px] flex h-[82px] shrink-0 flex-col justify-around">
            <Choice type="checkbox" label="全字匹配" />
            <Choice type="checkbox" label="区分大小写" />
            <Choice type="checkbox" label="在子结构中查找" />
            <Choice type="checkbox" label="在隐藏文本中查找" />
            <Choice type="checkbox" label="使用通配符" />
            <Choice type="checkbox" label="使用正则表达式" />
          </div>
          <div className="mt-[4px] flex shrink-0 flex-col gap-[4px]">
            <Choice type="radio" name="dir" label="向下" checked />
            <Choice type="radio" name="dir" label="向上" />
          </div>
          <button type="button" className={"mt-[3px] shrink-0 pl-[15px] " + softButton}>查找</button>
          <label htmlFor="repl" className="mt-[10px] leading-[10px]">替换为：</label>
          <input id="repl" className="mt-[1px] h-[10px] w-full shrink-0 border border-r-0 border-[#b0b0b0] bg-[#ececec]" />
          <div className="mt-[5px] flex shrink-0 flex-col gap-[3px]">
            <Choice type="radio" name="scope" label="整个文档" checked />
            <Choice type="radio" name="scope" label="从当前位置开始" />
            <Choice type="radio" name="scope" label="选择" />
          </div>
          <div className="mt-[3px] flex shrink-0 gap-[4px]">
            <button type="button" className={"w-[51px] shrink-0 " + softButton}>替换</button>
            <button type="button" className={"w-[51px] shrink-0 " + softButton}>全部替换</button>
          </div>
        </form>
        <VScroll before="h-0" thumb="flex-1" after="h-0" />
      </div>
      <div className="flex h-[10px] shrink-0 items-center bg-[#d0d0d0] pr-[10px]">
        <span className="flex h-full w-[10px] items-center justify-center bg-[#eee]"><Chevron dir="left" className="h-[6px] w-[6px]" /></span>
        <span className="flex h-full w-[61px] items-center justify-center border border-[#bababa] bg-[#ebebeb]">
          <span className="h-[3px] w-[4px] bg-[#999]" />
        </span>
        <span className="flex-1" />
        <span className="flex h-full w-[10px] items-center justify-center bg-[#eee]"><Chevron dir="right" className="h-[6px] w-[6px]" /></span>
      </div>
      <div className="border-t border-[#22222e]">
        <SectionHead>语言和资源</SectionHead>
      </div>
      <div className="flex flex-col border-b border-[#c4c4c4] pb-[5px] pl-[6px] pt-[7px] text-[#222]">
        <span className="leading-[10px]">编辑语言：</span>
        <div className="mt-[2px] flex gap-[2px] overflow-hidden">
          <Select label="编辑语言" value="中文（中华人民共和国）" className="w-[92px] shrink-0" />
          <span className="mt-[1px] h-[10px] w-[6px] shrink-0 bg-[#4a4ab0]" />
        </div>
      </div>
      <div className="flex min-h-0 flex-1 flex-col pl-[6px] pt-[7px] text-[#222]">
        <span className="leading-[10px]">参考语言：</span>
        <select aria-label="参考语言" className="mt-[2px] h-[12px] shrink-0 appearance-none border border-[#8a8a8a] bg-white pl-[3px] leading-[10px]">
          <option>中文（中华人民共和国）</option>
        </select>
        <div className="mt-[3px] flex-1 border border-r-0 border-[#b0b0b0] bg-[#e8e8e8]" />
      </div>
      <div className="mt-[8px] flex h-[10px] shrink-0 items-center justify-between bg-[#d0d0d0]">
        <span className="flex h-full w-[10px] items-center justify-center bg-[#eee]"><Chevron dir="left" className="h-[6px] w-[6px]" /></span>
        <span className="flex h-full w-[10px] items-center justify-center bg-[#eee]"><Chevron dir="right" className="h-[6px] w-[6px]" /></span>
      </div>
    </aside>
  );
}

function SideTab({ icon, children, className }) {
  return (
    <button
      type="button"
      className={"flex w-[13px] flex-col items-center justify-center gap-[2px] border border-l-0 border-[#999] bg-[#dedede] text-[9px] font-bold text-[#333] " + className}
    >
      {icon && <Glyph kind={icon} className="h-[9px] w-[9px]" />}
      <span className="leading-[11px] [text-orientation:sideways] [writing-mode:vertical-rl]">{children}</span>
    </button>
  );
}

/* ---------- bottom bars ---------- */

function StatusBar() {
  const tab = "flex h-[12px] w-[64px] items-center gap-[3px] border border-[#555] pl-[2px] ";
  return (
    <footer className="flex h-[16px] shrink-0 items-center bg-[#1d1d1d] text-[8px]">
      <button type="button" className="flex w-[102px] items-center gap-[4px] pl-[18px] font-bold text-white">
        <Glyph kind="triL" className="h-[8px] w-[8px]" />
        Portal 视图
      </button>
      <div className="flex flex-1 gap-[1px]">
        <button type="button" className={tab + "bg-[#c4c4c4]"}><Glyph kind="overview" className="h-[9px] w-[9px]" />总览</button>
        <button type="button" className={tab + "bg-[#c4c4c4] whitespace-nowrap"}><Glyph kind="network" className="h-[9px] w-[9px]" />设备和网络</button>
        <button type="button" className={tab + "bg-[#c4c4c4]"}><Glyph kind="param" className="h-[9px] w-[9px]" />参数</button>
        <button type="button" className={tab + "bg-white font-bold text-black"}><Glyph kind="tune" className="h-[9px] w-[9px]" />调试</button>
      </div>
      <div className="flex w-[200px] items-center gap-[4px] text-[7px] text-[#e4e4e4]">
        <Glyph kind="plc" className="h-[10px] w-[11px]" />
        <span className="flex items-center gap-[4px] border-l border-[#555] pl-[2px]">
          <Glyph kind="note" className="h-[8px] w-[8px]" />
          扫描接口 Killer E2400 Gigabit Etherne...
        </span>
      </div>
    </footer>
  );
}

function Taskbar() {
  const slot = "flex h-full w-[28px] items-center justify-center ";
  const run = "border-b-2 border-[#6ea9dd] pt-[2px] ";
  return (
    <footer className="flex h-[23px] shrink-0 items-center bg-linear-to-r from-[#1f3440] via-[#21394a] to-[#1d2a45] text-white">
      <button type="button" aria-label="开始" className="flex w-[27px] justify-center">
        <Svg className="h-[10px] w-[10px]">
          <path d="M0 2l9-1v8H0zM10 1l10-1v9H10zM0 10h9v8l-9-1zM10 10h10v10l-10-1z" fill="#fff" />
        </Svg>
      </button>
      <div className="flex h-full w-[162px] items-center bg-[#f2f2f2] pl-[6px]">
        <Svg className="h-[10px] w-[10px]">
          <circle cx="12" cy="8" r="6.500" fill="none" stroke="#333" strokeWidth="1.800" />
          <path d="M7 13l-6 6" stroke="#333" strokeWidth="2" />
        </Svg>
        <input aria-label="搜索" placeholder="搜索" className="ml-[6px] w-[92px] text-[8px] placeholder:text-[#333]" />
        <Svg className="h-[22px] w-[46px]" box="0 0 92 44">
          <path d="M0 44c10-12 20-12 34-12h58v12z" fill="#e8c48b" />
          <circle cx="18" cy="14" r="8" fill="#fff" stroke="#33465c" strokeWidth="2.500" />
          <path d="M18 9v6h5" fill="none" stroke="#33465c" strokeWidth="2" />
          <rect x="32" y="6" width="30" height="24" rx="2" fill="#3f97d4" />
          <rect x="36" y="10" width="22" height="16" fill="#a9dbf5" />
          <path d="M34 32h32l6 6H32z" fill="#c7d5e0" />
          <path d="M72 22h13l-2 16H74z" fill="#d3483c" />
          <path d="M78 22l-5-12M79 22V6M80 22l6-11" stroke="#4d9b58" strokeWidth="3" />
        </Svg>
      </div>
      <span className={slot}>
        <Svg className="h-[10px] w-[10px]">
          <path d="M2 1v3h10V1M2 19v-3h10v3M2 7h10v6H2zM17 1v18M15 8h4" fill="none" stroke="#fff" strokeWidth="1.800" />
        </Svg>
      </span>
      <span className={slot + run}>
        <Svg className="h-[14px] w-[14px]">
          <circle cx="10" cy="10" r="9" fill="#1f86d0" />
          <path d="M1 9C3 0 17-1 19 9c0 4-6 5-7 2 1-5-7-6-11-2z" fill="#4fd0a8" />
          <path d="M8 9c-3 4 1 10 7 9-7 3-13-1-12-7 1-2 3-3 5-2z" fill="#114f98" />
        </Svg>
      </span>
      <span className={slot}>
        <Svg className="h-[13px] w-[13px]">
          <path d="M7 5V2h6v3" fill="none" stroke="#e8e8e8" strokeWidth="1.800" />
          <rect x="1" y="5" width="18" height="14" rx="2" fill="#f5f5f5" />
          <path d="M6 8h3.500v3.500H6z" fill="#e5502c" />
          <path d="M10.500 8H14v3.500h-3.500z" fill="#7cb82f" />
          <path d="M6 12.500h3.500V16H6z" fill="#2c9fe0" />
          <path d="M10.500 12.500H14V16h-3.500z" fill="#f2b81f" />
        </Svg>
      </span>
      <span className={slot + run}>
        <Svg className="h-[13px] w-[13px]">
          <path d="M1 3h7l2 2h9v13H1z" fill="#e9b93a" />
          <path d="M1 8h18v10H1z" fill="#fbe08a" />
          <path d="M5 12h10v6h-3v-3H8v3H5z" fill="#3d8bd0" />
        </Svg>
      </span>
      <span className={slot + run}>
        <Svg className="h-[13px] w-[13px]">
          <rect x="1" y="1" width="17" height="13" fill="#dfe7ee" />
          <path d="M3 4h6v3H3zM11 4h5M11 7h5M3 10h13" stroke="#53718d" strokeWidth="1.500" fill="#7fb0d6" />
          <rect x="9" y="11" width="9" height="8" fill="#7d8c99" />
        </Svg>
      </span>
      <span className={slot + run + "flex-col text-[8px] leading-[8px]"}>
        <span>TIA</span>
        <span>V16</span>
      </span>
      <span className={slot + run}>
        <Svg className="h-[13px] w-[13px]">
          <rect x="1" y="1" width="18" height="18" fill="#6d9a87" />
          <path d="M1 1h9v8H1z" fill="#b76f8f" />
          <path d="M11 1h8v9h-8z" fill="#c9b35e" />
          <path d="M4 4l13 14" stroke="#2f3a40" strokeWidth="3" />
        </Svg>
      </span>
      <span className="flex-1" />
      <Svg className="h-[14px] w-[15px]">
        <circle cx="10" cy="7" r="5" fill="#f0c24a" />
        <path d="M10 1l3 5M4 3l4 4" stroke="#f7dd8a" strokeWidth="2" />
        <path d="M3 18a4 4 0 0 1 1-8 6 5 0 0 1 11 1 4 3.500 0 0 1 1 7z" fill="#c9dcf5" />
      </Svg>
      <span className="ml-[5px] w-[49px] whitespace-nowrap text-[9px]">22℃&ensp;多云</span>
      <div className="flex w-[114px] items-center gap-[5px]">
        <Svg className="h-[9px] w-[9px]"><path d="M3 13l7-7 7 7" fill="none" stroke="#fff" strokeWidth="2" /></Svg>
        <Svg className="h-[9px] w-[10px]"><path d="M4 16a4 4 0 0 1 0-8 6 5 0 0 1 11 0 4 4 0 0 1 1 8z" fill="#f2f2f2" /></Svg>
        <Svg className="h-[10px] w-[9px]"><circle cx="10" cy="6" r="5" fill="#222" /><path d="M3 17c0-10 14-10 14 0l-7 2z" fill="#d8432f" /><circle cx="10" cy="14" r="3" fill="#fff" /></Svg>
        <Svg className="h-[10px] w-[9px]"><circle cx="12" cy="6" r="4" fill="#e9b0cf" /><path d="M3 18c0-10 14-12 14-2l-7 3z" fill="#d63384" /></Svg>
        <Svg className="h-[9px] w-[10px]"><path d="M6 3h13v9H6zM2 7v9h8M12 12v5" fill="none" stroke="#fff" strokeWidth="1.800" /></Svg>
        <Svg className="h-[9px] w-[9px]"><path d="M1 7h4l5-4v14l-5-4H1zM13 6c2 2 2 6 0 8M16 4c3 4 3 8 0 12" fill="none" stroke="#fff" strokeWidth="1.600" /></Svg>
        <span className="text-[9px] font-bold">中</span>
        <Svg className="ml-[2px] h-[9px] w-[9px]"><path d="M1 1h18v18H1zM5 5h10v4H5zM4 13h12M7 9v8M13 9v8" fill="none" stroke="#fff" strokeWidth="1.800" /></Svg>
      </div>
      <div className="flex w-[48px] flex-col items-center text-[8px] leading-[11px]">
        <span>22:12</span>
        <span>2023/4/3</span>
      </div>
      <span className="mr-[4px] flex w-[24px] justify-center border-r border-[#5a6a7a]">
        <Svg className="h-[10px] w-[10px]"><path d="M2 2h16v13h-5l-3 4v-4H2z" fill="none" stroke="#fff" strokeWidth="1.600" /></Svg>
      </span>
    </footer>
  );
}

/* ---------- overlays ---------- */

const dialogText = [
  ["控制面板的主控权将会激活。", "想要继续吗？"],
  ["该功能用于调试、诊断和维修", "并只能由经授权的人员使用。", "PLC的安全设置会被关闭。"],
  ["无法保证\"空格键停止\"功能适用于驱动的所有", "运行条件。因此需要一套实现急停的硬件", "解决方案。必须采取必要的", "措施。"],
  ["当与PC相连时，只能手动调节驱动。", "对连接进行循环监控。"],
];

function Dialog() {
  return (
    <div
      role="dialog"
      aria-labelledby="dlg"
      className="absolute left-[449px] top-[174px] flex h-[237px] w-[182px] flex-col border-b-4 border-[#1d1d1d] bg-[#c8c8c8] text-[7px] text-[#222] shadow-[0_0_0_1px_#555]"
    >
      <div className="flex h-[13px] shrink-0 items-center justify-between bg-linear-to-b from-[#555] to-[#111] px-[3px] text-[8px] font-bold text-white">
        <span id="dlg">激活主控权</span>
        <button type="button" aria-label="关闭"><Glyph kind="closew" className="h-[8px] w-[8px]" /></button>
      </div>
      <div className="flex flex-1 pt-[7px]">
        <div className="w-[30px] shrink-0 pl-[4px]">
          <Glyph kind="warn" className="h-[17px] w-[18px]" />
        </div>
        <div className="flex flex-1 flex-col">
          <div className="flex flex-col gap-[8px] whitespace-nowrap leading-[8px]">
            {dialogText.map((para, i) => (
              <div key={i}>
                {para.map((line) => (
                  <p key={line}>{line}</p>
                ))}
              </div>
            ))}
          </div>
          <div className="mt-[9px] flex items-center">
            <label htmlFor="mon" className="w-[83px]">监控时间：</label>
            <input id="mon" defaultValue="2000" className="h-[11px] w-[45px] border border-[#9b9b9b] bg-white pr-[2px] text-right" />
            <span className="ml-[2px]">ms</span>
          </div>
        </div>
      </div>
      <div className="flex h-[25px] shrink-0 items-center justify-end gap-[4px] bg-[#acacac] pr-[8px]">
        <button type="button" className="h-[12px] w-[50px] border border-[#8c8c8c] bg-linear-to-b from-[#f6f6f6] to-[#cfcfcf]">应用</button>
        <button type="button" className="h-[12px] w-[50px] border border-[#8c8c8c] bg-linear-to-b from-[#f6f6f6] to-[#cfcfcf]">取消</button>
      </div>
    </div>
  );
}

function Annotations() {
  return (
    <>
      <svg viewBox="0 0 1080 608" className="pointer-events-none absolute left-0 top-0 h-[608px] w-[1080px]" aria-hidden="true">
        <g fill="none" stroke="#1616b0" strokeWidth="2">
          <rect x="237" y="111" width="42" height="12.500" />
          <rect x="401" y="150" width="63" height="15.500" />
          <rect x="552.500" y="309.500" width="74" height="22" />
          <rect x="514" y="381.500" width="57" height="24" />
          <path d="M283 114.500L391 144.500M438.500 168l5 10M624 309l19-5" strokeWidth="1.600" />
        </g>
        <g fill="#1616b0">
          <path d="M398 146.500l-8.500 1.500 2-6.500z" />
          <path d="M446 184l-7-6 6-2.500z" />
          <path d="M651 302l-7 5-1.500-6z" />
        </g>
        <g stroke="#8e8e8e" strokeWidth="0.800">
          <path d="M878 540c-9 0-15.500 6-15.500 13.500 0 4.500 2.500 8 6 10.500l-1.500 5 5.500-3c8 2.500 20 0 21-12.500 0-8-7-13.500-15.500-13.500z" fill="#fff" />
          <path d="M892 551.500c-8 0-13 5-13 11s5 11 13 11c1.600 0 3-.2 4.500-.6l4.500 2.600-1.300-4.300c3-2 5.300-5 5.300-8.700 0-6-5-11-13-11z" fill="#fff" />
        </g>
        <g fill="none" stroke="#777" strokeWidth="1.300">
          <path d="M870.500 550.500q2-3 4 0M881.500 550.500q2-3 4 0M885.500 561q1.700-2.600 3.400 0M895 561q1.700-2.600 3.400 0" />
        </g>
      </svg>
      <span className="absolute left-[467px] top-[129px] text-[18px] font-bold leading-[20px] text-[#c01c1c]">激活</span>
      <span className="absolute left-[655px] top-[294px] whitespace-nowrap text-[18px] font-bold leading-[20px] text-[#c01c1c]">
        设置调试时间（秒）
      </span>
      <span className="absolute left-[911px] top-[544px] whitespace-nowrap text-[27px] leading-[30px] text-white [text-shadow:1px_1px_1px_#666,0_0_2px_#888]">
        电子技术控
      </span>
    </>
  );
}

export default function App() {
  return (
    <div className="relative flex h-screen w-full flex-col overflow-hidden bg-[#b3b3b3] font-['Lato','Noto_Sans_CJK_SC',sans-serif] text-[#333]">
      <TitleBar />
      <Header />
      <div className="flex min-h-0 flex-1">
        <div className="flex w-[13px] shrink-0 flex-col bg-[#b0b0b0] pt-[15px]">
          <button type="button" className="flex h-[122px] items-center justify-center border-y border-[#d0d0d0] text-[9px] font-bold text-white">
            <span className="rotate-180 leading-[11px] [text-orientation:sideways] [writing-mode:vertical-rl]">启动</span>
          </button>
        </div>
        <ProjectTree />
        <WorkArea />
        <Tasks />
        <div className="flex w-[14px] shrink-0 flex-col gap-[3px] border-l border-[#777] bg-[#b3b3b3] pt-[15px]">
          <SideTab icon="task" className="h-[42px]">任务</SideTab>
          <SideTab icon="book" className="h-[32px]">库</SideTab>
          <SideTab className="h-[33px]">插件</SideTab>
        </div>
      </div>
      <StatusBar />
      <Taskbar />
      <Dialog />
      <Annotations />
    </div>
  );
}
